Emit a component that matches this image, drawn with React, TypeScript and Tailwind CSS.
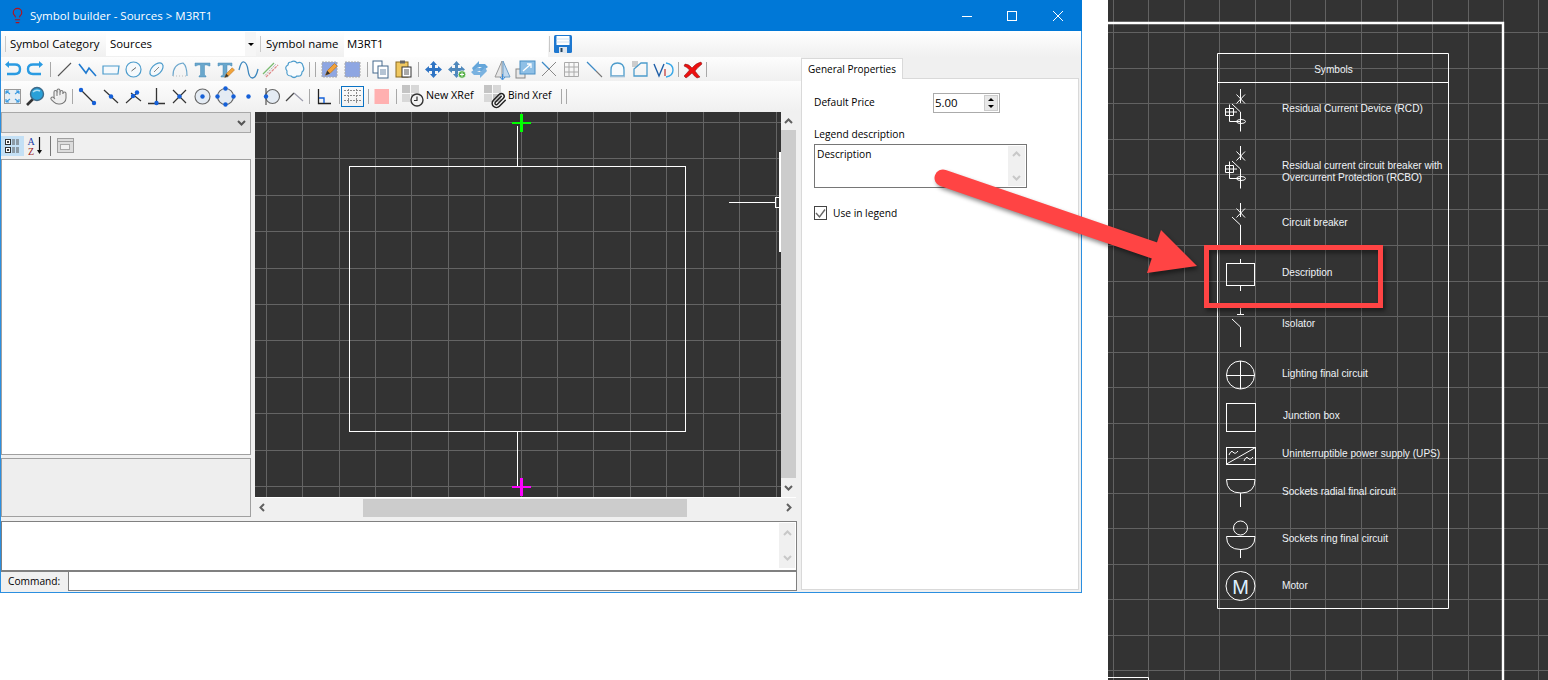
import React from "react";
import { Hand, Lightbulb, Paperclip } from "lucide-react";

const D = "#1560d8";

function Ico({ children }: { children: React.ReactNode }) {
  return (
    <svg width="23" height="23" viewBox="0 0 23 23" fill="none" className="shrink-0">
      {children}
    </svg>
  );
}

const Sep = ({ ml = 0, mr = 0 }: { ml?: number; mr?: number }) => (
  <div className="w-px h-[15px] bg-[#a8a8a8] shrink-0" style={{ marginLeft: ml, marginRight: mr }} />
);

const Dots = ({ pts }: { pts: number[][] }) => (
  <>
    {pts.map((p, i) => (
      <circle key={i} cx={p[0]} cy={p[1]} r="2.2" fill={D} />
    ))}
  </>
);

const Pencil = ({ x = 0, y = 0, s = 1 }: { x?: number; y?: number; s?: number }) => (
  <g transform={`translate(${x} ${y}) scale(${s})`}>
    <path d="M5 18 L7 13 L15 5 L18 8 L10 16 Z" fill="#f2a33a" stroke="#b5701a" strokeWidth="0.7" />
    <path d="M5 18 L7 13 L10 16 Z" fill="#333" />
  </g>
);

const row2a = [
  <Ico><path d="M8 6.5 H14 Q19 6.5 19 11 Q19 16 14 16 H6" stroke="#2a9be2" strokeWidth="2.4" /><path d="M8 3 V10 L4 6.5 Z" fill="#2a9be2" /></Ico>,
  <Ico><path d="M15 6.5 H9 Q4 6.5 4 11 Q4 16 9 16 H17" stroke="#2a9be2" strokeWidth="2.4" /><path d="M15 3 V10 L19 6.5 Z" fill="#2a9be2" /></Ico>,
];
const row2b = [
  <Ico><path d="M5 18 L18 5" stroke="#555" strokeWidth="1.1" /></Ico>,
  <Ico><path d="M3 6 L10 15 L13 10 L20 18" stroke="#1f7ad0" strokeWidth="1.6" /></Ico>,
  <Ico><path d="M4 8 H20 L19 16 H4 Z" stroke="#4c9ccc" strokeWidth="1.2" fill="#f5f9fc" /></Ico>,
  <Ico><circle cx="11.5" cy="11.5" r="7.5" stroke="#4c9ccc" strokeWidth="1.2" fill="#f5f9fc" /><path d="M9.5 13 L14 9.5" stroke="#666" /></Ico>,
  <Ico><ellipse cx="11.5" cy="11.5" rx="8" ry="4.8" transform="rotate(-45 11.5 11.5)" stroke="#4c9ccc" strokeWidth="1.2" fill="#f5f9fc" /><path d="M9 14 L14 9" stroke="#888" /></Ico>,
  <Ico><path d="M5 18 Q5 6 15 5 Q19 8 19 18" stroke="#6ca7cd" strokeWidth="1.2" /><path d="M17 18 h2 M5 18 h11" stroke="#bbb" strokeDasharray="1 2" /></Ico>,
  <Ico><path d="M4 5 H19 V8 H18 L16 7 H13.5 V17 L15 18 V19 H8 V18 L9.5 17 V7 H7 L5 8 H4 Z" fill="#6aa7cc" stroke="#4d8fb8" strokeWidth="0.5" /></Ico>,
  <Ico><path d="M4 5 H18 V8 H17 L16 7 H13 V17 L14 18 V19 H7 V18 L9 17 V7 H6 L5 8 H4 Z" fill="#6aa7cc" stroke="#4d8fb8" strokeWidth="0.5" /><Pencil x={7} y={6} s={0.75} /></Ico>,
  <Ico><path d="M2 12 Q4 3 7 4 Q10 5 11 12 Q12 20 15.5 20 Q19 20 21 11" stroke="#3c86bd" strokeWidth="1.3" /></Ico>,
  <Ico><path d="M3 16 L14 5" stroke="#7abb70" strokeWidth="1.3" /><path d="M6 19 L18 7" stroke="#e08a8a" strokeWidth="1.3" strokeDasharray="3 1" /><path d="M5 17.5 L16 6" stroke="#aaa" strokeDasharray="2 1" /></Ico>,
  <Ico><path d="M8 4 Q12 2 14 5 Q19 3 20 8 Q22 12 19 14 Q19 19 14 18 Q11 21 8 18 Q3 18 4 13 Q1 9 5 7 Q5 4 8 4 Z" stroke="#4c9ccc" strokeWidth="1.2" fill="#f8fbfd" /></Ico>,
];
const row2c = [
  <Ico><rect x="4" y="4" width="15" height="15" fill="#8ea6e2" stroke="#aaa" strokeDasharray="2 1" /><Pencil x={3} y={1} s={0.9} /></Ico>,
  <Ico><rect x="4" y="4" width="15" height="15" fill="#8ea6e2" stroke="#aaa" strokeDasharray="2 1" /></Ico>,
];
const row2d = [
  <Ico><rect x="4" y="3" width="9" height="12" fill="#fff" stroke="#44688c" /><rect x="9" y="8" width="10" height="12" fill="#fff" stroke="#44688c" /><path d="M11 12 h6 M11 14 h6 M11 16 h6" stroke="#6b88a8" /></Ico>,
  <Ico><rect x="4" y="4" width="12" height="15" fill="#f0c860" stroke="#8a6a20" /><rect x="8" y="2.5" width="5" height="3" fill="#666" /><rect x="10" y="9" width="9" height="10" fill="#fff" stroke="#333" /><path d="M12 12 h5 M12 14 h5 M12 16 h5" stroke="#555" /></Ico>,
];
const Move = ({ c = "#2f74c4" }: { c?: string }) => (
  <path d="M11.5 3 L15 7 H13 V10 H16 V8 L20 11.5 L16 15 V13 H13 V16 H15 L11.5 20 L8 16 H10 V13 H7 V15 L3 11.5 L7 8 V10 H10 V7 H8 Z" fill={c} />
);
const row2e = [
  <Ico><Move /></Ico>,
  <Ico><Move c="#4f88bc" /><circle cx="17" cy="16.5" r="3.8" fill="#58b048" stroke="#fff" strokeWidth="0.7" /><path d="M15 16.5 h4 M17 14.5 v4" stroke="#fff" /></Ico>,
  <Ico><path d="M4 10 L11 3 V6 H17 L20 9 L13 14 L10 11 L14 9 H10 L6 14 Z" fill="#65a6da" /><path d="M19 13 L12 20 V17 H6 L3 14 L10 9 L13 12 L9 14 H13 L17 9 Z" fill="#7ab2e0" /></Ico>,
  <Ico><path d="M11 3 V19 H4 Z" fill="#e6e6e6" stroke="#999" /><path d="M12 3 V19 H19 Z" fill="#c2d9ef" stroke="#6f9fc8" /><path d="M11.5 16 V21 M9 19 L11.5 22 L14 19" stroke="#3a8ad8" /></Ico>,
  <Ico><rect x="2" y="11" width="9" height="9" fill="#e8e8e8" stroke="#888" /><rect x="6" y="3" width="15" height="13" fill="#8fc0e6" stroke="#4a8fc4" /><path d="M9 13 L17 6 M13 6 h4 v4" stroke="#fff" strokeWidth="1.3" /></Ico>,
  <Ico><path d="M5 4 L12 11" stroke="#3c8ac6" strokeWidth="1.2" /><path d="M12 11 L19 18" stroke="#888" strokeWidth="1" /><path d="M19 4 L5 18" stroke="#888" strokeWidth="1" /></Ico>,
  <Ico><path d="M4.5 4.5 H18.5 V18.5 H4.5 Z M9 4.5 V18.5 M14 4.5 V18.5 M4.5 9 H18.5 M4.5 14 H18.5" stroke="#aaa" /></Ico>,
  <Ico><path d="M4 4 L13 13" stroke="#3c8ac6" strokeWidth="1.2" /><path d="M13 13 L19 19" stroke="#777" strokeWidth="1.1" /></Ico>,
  <Ico><path d="M5 18 V12 Q5 5 11.5 5 Q18 5 18 12 V18 Z" stroke="#4c9ccc" strokeWidth="1.3" fill="#f8fbfd" /><path d="M4 18.5 H19" stroke="#9fc0d8" strokeWidth="1.6" /></Ico>,
  <Ico><rect x="3" y="3" width="6" height="6" fill="#ccc" /><path d="M5 18 V11 L12 5 H18 V18 Z" stroke="#4c9ccc" strokeWidth="1.3" /></Ico>,
  <Ico><path d="M2 6 L7 18 L12 6" stroke="#1f5fa8" strokeWidth="1.4" /><path d="M14 5 Q21 6 21 12 Q21 18 14 19" stroke="#38a8e8" strokeWidth="1.4" /><path d="M13 11 V18" stroke="#c03030" strokeWidth="1.2" /></Ico>,
];
const row3a = [
  <Ico><rect x="3.5" y="4.5" width="16" height="14" fill="#e6eef4" stroke="#999" /><path d="M5 6 L9 9 M5 6 h3 M5 6 v3 M18 6 L14 9 M18 6 h-3 M18 6 v3 M5 17 L9 14 M5 17 h3 M5 17 v-3 M18 17 L14 14 M18 17 h-3 M18 17 v-3" stroke="#3a9ae0" strokeWidth="1.1" /></Ico>,
  <Ico><path d="M9 14 L3 20" stroke="#333" strokeWidth="2.6" /><circle cx="13" cy="9" r="6.5" fill="#29a0d8" stroke="#3d6a8a" strokeWidth="1.4" /><path d="M9 7 Q12 4 16 6" stroke="#aee0f6" strokeWidth="1.4" /></Ico>,
  <Ico><g transform="translate(2.5 2.5)"><Hand size={18} stroke="#777" strokeWidth={1.4} fill="#eee" /></g></Ico>,
];
const row3b = [
  <Ico><path d="M5 5 L18 18" stroke="#333" strokeWidth="1.2" /><Dots pts={[[5, 5], [18, 18]]} /></Ico>,
  <Ico><path d="M5 5 L19 18" stroke="#333" strokeWidth="1.2" /><Dots pts={[[12, 11.5]]} /></Ico>,
  <Ico><path d="M4 18 L15 8 M9 8 L19 16" stroke="#333" strokeWidth="1.1" /><Dots pts={[[11, 11], [15, 7.5]]} /></Ico>,
  <Ico><path d="M11.5 3 V18 M3 18.5 H20" stroke="#333" strokeWidth="1.3" /><Dots pts={[[11.5, 18]]} /></Ico>,
  <Ico><path d="M5 5 L18 18 M18 5 L5 18" stroke="#333" strokeWidth="1.2" /><Dots pts={[[11.5, 11.5]]} /></Ico>,
  <Ico><circle cx="11.5" cy="11.5" r="7.5" fill="#e4ebf3" stroke="#666" strokeWidth="1.1" /><Dots pts={[[11.5, 11.5]]} /></Ico>,
  <Ico><circle cx="11.5" cy="11.5" r="8" fill="#e4ebf3" stroke="#666" strokeWidth="1.1" /><Dots pts={[[11.5, 3.5], [11.5, 19.5], [3.5, 11.5], [19.5, 11.5]]} /></Ico>,
  <Ico><Dots pts={[[11.5, 11.5]]} /></Ico>,
  <Ico><circle cx="12.5" cy="11.5" r="7" fill="#e4ebf3" stroke="#666" strokeWidth="1.1" /><path d="M6 3 V20" stroke="#444" strokeWidth="1.1" /><Dots pts={[[6, 11.5]]} /></Ico>,
  <Ico><path d="M3 16 L11 8" stroke="#444" strokeWidth="1.2" /><path d="M11 8 L20 16" stroke="#99a" strokeWidth="1.2" /></Ico>,
];

const Chev = ({ dir, c = "#606060" }: { dir: "u" | "d" | "l" | "r"; c?: string }) => {
  const d = { u: "M2 7 L5.5 3.5 L9 7", d: "M2 4 L5.5 7.5 L9 4", l: "M7 2 L3.5 5.5 L7 9", r: "M4 2 L7.5 5.5 L4 9" }[dir];
  return (
    <svg width="11" height="11" viewBox="0 0 11 11" fill="none" className="shrink-0">
      <path d={d} stroke={c} strokeWidth="2" />
    </svg>
  );
};

const cgx = [266, 302, 339, 375, 411, 448, 484, 521, 557, 593, 630, 666, 703, 739, 776];
const cgy = [122, 158, 195, 231, 268, 304, 340, 377, 413, 450, 486];

function CadCanvas() {
  return (
    <svg width="526" height="385" viewBox="255 112 526 385" className="block shrink-0 bg-[#333333]" fill="none">
      <g stroke="#646464" shapeRendering="crispEdges">
        {cgx.map((x) => <path key={x} d={`M${x + 0.5} 112 V497`} />)}
        {cgy.map((y) => <path key={y} d={`M255 ${y + 0.5} H781`} />)}
      </g>
      <g stroke="#ffffff" shapeRendering="crispEdges">
        <rect x="349.5" y="166.5" width="336" height="265" />
        <path d="M517.5 126 V166 M517.5 432 V487 M729 202.5 H775" />
        <rect x="775.5" y="197.5" width="5" height="10" />
        <path d="M780 152 V252" strokeWidth="2" />
      </g>
      <g shapeRendering="crispEdges">
        <rect x="512" y="122" width="19" height="2" fill="#00ff00" />
        <rect x="520" y="114" width="3" height="18" fill="#00ff00" />
        <rect x="512" y="486" width="19" height="2" fill="#ff00ff" />
        <rect x="520" y="478" width="3" height="18" fill="#ff00ff" />
      </g>
    </svg>
  );
}

const rgx = [1113, 1148, 1184, 1219, 1255, 1290, 1325, 1361, 1397, 1432, 1468, 1503, 1538];
const rgy = [32, 68, 103, 139, 174, 209, 245, 281, 316, 352, 387, 423, 458, 493, 528, 564, 599, 635, 670];

const labels: [string, number, number][] = [
  ["Residual Current Device (RCD)", 1282, 111.5],
  ["Residual current circuit breaker with", 1282, 168.5],
  ["Overcurrent Protection (RCBO)", 1282, 180.5],
  ["Circuit breaker", 1282, 225.5],
  ["Description", 1282, 275.5],
  ["Isolator", 1282, 326.5],
  ["Lighting final circuit", 1282, 376.5],
  ["Junction box", 1283, 418.5],
  ["Uninterruptible power supply (UPS)", 1282, 456.5],
  ["Sockets radial final circuit", 1282, 494.5],
  ["Sockets ring final circuit", 1282, 541.5],
  ["Motor", 1282, 588.5],
];

const Rcd = ({ dy = 0 }: { dy?: number }) => (
  <g transform={`translate(0 ${dy})`}>
    <path d="M1240.5 89 V103 M1236.5 94.5 L1245 103.5 M1245 94.5 L1236.5 103.5 M1232 104 L1240.5 112 V131.5" />
    <path d="M1225.5 108.5 H1233.5 V115.5 H1225.5 Z M1229.5 104.5 V121.5 H1241 M1225.5 112 H1237" />
    <ellipse cx="1241" cy="121.5" rx="4.5" ry="2" />
  </g>
);

function Legend() {
  return (
    <svg width="440" height="680" viewBox="1108 0 440 680" className="block bg-[#333333]" fill="none">
      <g stroke="#626262" shapeRendering="crispEdges">
        {rgx.map((x) => <path key={x} d={`M${x + 0.5} 0 V680`} />)}
        {rgy.map((y) => <path key={y} d={`M1108 ${y + 0.5} H1548`} />)}
      </g>
      <path d="M1108 23 H1503 V680" stroke="#ffffff" strokeWidth="2.4" />
      <path d="M1108 677.5 H1148.5 V680" stroke="#ffffff" />
      <g stroke="#ffffff" strokeWidth="1">
        <path d="M1217.5 53.5 H1448.5 V608.5 H1217.5 Z M1217.5 82.5 H1448.5" />
        <Rcd />
        <Rcd dy={57} />
        <path d="M1240.5 203 V217 M1236.5 208.5 L1245 217.5 M1245 208.5 L1236.5 217.5 M1232 217 L1240.5 225 V247" />
        <path d="M1240.5 259 V263 M1240.5 285 V291" />
        <rect x="1226.5" y="263.5" width="28" height="22" />
        <path d="M1240.5 307 V314 M1237 314.5 H1244 M1232 319 L1240.5 327 V347" />
        <circle cx="1240.5" cy="375" r="14" />
        <path d="M1226.5 375.5 H1254.5 M1240.5 361 V389" />
        <rect x="1226.5" y="403.5" width="29" height="28" />
        <rect x="1226.5" y="447.5" width="29" height="17" />
        <path d="M1226.5 464 L1255.5 447.5 M1229 455 Q1231 450 1233 452 Q1235 455 1238 451 M1244 461 Q1246 456 1248 458 Q1250 461 1253 457" />
        <path d="M1226.5 479.5 H1255 Q1255 493 1241 493 Q1226.5 493 1226.5 479.5 Z M1240.5 493 V507" />
        <circle cx="1240.5" cy="528" r="7" />
        <path d="M1226.5 536.5 H1255 Q1255 549.5 1241 549.5 Q1226.5 549.5 1226.5 536.5 Z M1240.5 549.5 V558" />
        <circle cx="1240.5" cy="586" r="14.5" />
      </g>
      <text x="1240.7" y="593.5" textAnchor="middle" fill="#dff0ff" fontSize="20" fontFamily="'Liberation Sans', Arial, sans-serif">M</text>
      <text x="1333.5" y="72.5" textAnchor="middle" fill="#f0f4f8" fontSize="10.1" fontFamily="'Liberation Sans', Arial, sans-serif">Symbols</text>
      {labels.map(([t, x, y]) => (
        <text key={t} x={x} y={y} fill="#f0f4f8" fontSize="10.1" fontFamily="'Liberation Sans', Arial, sans-serif">{t}</text>
      ))}
    </svg>
  );
}

const VBar = ({ cls }: { cls: string }) => <div className={`w-[1px] bg-[#c8c8c8] shrink-0 ${cls}`} />;

export default function App() {
  return (
    <div className="relative flex w-[1548px] h-[680px] overflow-hidden bg-white font-['Open_Sans','Liberation_Sans',sans-serif] text-[11.4px] text-black">
      {/* Window */}
      <div className="flex flex-col w-[1082px] h-[593px] shrink-0 border-x border-b border-[#2b8fe0] bg-[#f0f0f0]">
        <div className="flex items-center h-[31px] -mx-px bg-[#0078d7] text-white shrink-0">
          <div className="w-[9px]" />
          <Lightbulb size={17} stroke="#b5121b" strokeWidth={1.6} />
          <span className="ml-[4px] text-[11.5px]">Symbol builder - Sources &gt; M3RT1</span>
          <div className="flex-1" />
          <svg width="12" height="12" viewBox="0 0 12 12" className="mr-[33px]"><path d="M1 6.5 H11" stroke="#fff" /></svg>
          <svg width="12" height="12" viewBox="0 0 12 12" className="mr-[34px]"><rect x="1.5" y="1.5" width="9" height="9" stroke="#fff" fill="none" /></svg>
          <svg width="12" height="12" viewBox="0 0 12 12" className="mr-[18px]"><path d="M1 1 L11 11 M11 1 L1 11" stroke="#fff" /></svg>
        </div>

        <div className="flex items-center h-[26px] shrink-0 bg-linear-to-b from-white to-[#f0f0f0]">
          <VBar cls="ml-[4px] h-[16px]" />
          <span className="ml-[4px] w-[96px]">Symbol Category</span>
          <div className="flex items-center h-[24px] w-[150px] bg-white pl-[4px]">
            <span className="flex-1">Sources</span>
            <div className="flex items-center justify-center w-[11px] h-full bg-[#f6f6f6]">
              <div className="w-0 h-0 border-x-[3px] border-x-transparent border-t-[3px] border-t-black" />
            </div>
          </div>
          <VBar cls="ml-[4px] h-[16px]" />
          <span className="ml-[5px] w-[78px]">Symbol name</span>
          <div className="flex items-center h-[25px] w-[204px] bg-white pl-[3px]">M3RT1</div>
          <VBar cls="ml-[1px] h-[16px]" />
          <svg width="18" height="18" viewBox="0 0 18 18" className="ml-[4px]">
            <rect x="0" y="0" width="18" height="18" rx="1.5" fill="#1e78d0" />
            <rect x="2.5" y="1" width="13" height="9" fill="#ffffff" />
            <path d="M2.5 4 H15.5 M2.5 7 H15.5" stroke="#d0e0f0" />
            <rect x="5" y="12" width="8" height="6" fill="#dfe6ee" />
            <rect x="6.5" y="13" width="2" height="4" fill="#24425e" />
          </svg>
        </div>

        <div className="flex flex-1 min-h-0">
          <div className="flex flex-col w-[796px] shrink-0">
            {/* toolbars */}
            <div className="flex items-center h-[24px] shrink-0 bg-linear-to-b from-[#fdfdfd] to-[#f0f0f0] w-[800px]">
              {row2a.map((e, i) => <React.Fragment key={i}>{e}</React.Fragment>)}
              <Sep ml={3} mr={2} />
              {row2b.map((e, i) => <React.Fragment key={i}>{e}</React.Fragment>)}
              <Sep ml={3} /><Sep ml={5} mr={2} />
              {row2c.map((e, i) => <React.Fragment key={i}>{e}</React.Fragment>)}
              <Sep ml={3} mr={1} />
              {row2d.map((e, i) => <React.Fragment key={i}>{e}</React.Fragment>)}
              <Sep ml={3} mr={3} />
              {row2e.map((e, i) => <React.Fragment key={i}>{e}</React.Fragment>)}
              <Sep ml={3} mr={2} />
              <Ico><path d="M4 6 Q8 6 11 10 Q15 5 20 4 L21 6 Q16 10 14 13 Q17 17 19 19 L16 20 Q13 18 11 15 Q8 18 5 20 L3 18 Q6 15 8.5 12 Q6 9 3 8 Z" fill="#ee1010" stroke="#7a1010" strokeWidth="0.5" /></Ico>
              <Sep ml={2} />
            </div>
            <div className="flex items-center h-[30px] shrink-0 bg-linear-to-b from-[#fdfdfd] to-[#f0f0f0] w-[800px]">
              {row3a.map((e, i) => <React.Fragment key={i}>{e}</React.Fragment>)}
              <Sep ml={2} mr={3} />
              {row3b.map((e, i) => <React.Fragment key={i}>{e}</React.Fragment>)}
              <Sep ml={3} mr={2} />
              <Ico><path d="M6.5 4 V18.5 H19" stroke="#222" strokeWidth="1.3" /><path d="M7 13 H12 V18" stroke="#1560d8" strokeWidth="1.4" /></Ico>
              <Sep ml={4} mr={1} />
              <div className="flex items-center justify-center w-[23px] h-[21px] border border-[#0a72c4] shrink-0">
                <svg width="17" height="15" viewBox="0 0 17 15" fill="none"><path d="M0 1.5 H17 M0 6.5 H17 M0 11.5 H17 M4.5 0 V15 M12.5 0 V15" stroke="#8a8a8a" strokeDasharray="2 1" /></svg>
              </div>
              <Sep ml={4} mr={1} />
              <Ico><rect x="4.5" y="4" width="14.5" height="15" fill="#ffb0b0" /></Ico>
              <Sep ml={3} mr={4} />
              <svg width="24" height="24" viewBox="0 0 24 24" fill="none" className="shrink-0">
                <rect x="1" y="1" width="8" height="8" fill="#c4c4c4" /><rect x="10" y="1" width="8" height="8" fill="#d8d8d8" /><rect x="1" y="10" width="8" height="8" fill="#d8d8d8" /><rect x="10" y="10" width="8" height="8" fill="#c4c4c4" />
                <circle cx="16" cy="16" r="6" fill="#f2f2f2" stroke="#333" strokeWidth="1.4" /><path d="M16 12.5 V16.5 H13" stroke="#333" strokeWidth="1.2" />
              </svg>
              <span className="ml-[1px] w-[57px] text-[10.7px] -mt-[1px]">New XRef</span>
              <div className="relative w-[24px] h-[24px] shrink-0">
                <svg width="24" height="24" viewBox="0 0 24 24" className="absolute inset-0"><rect x="1" y="1" width="8" height="8" fill="#c4c4c4" /><rect x="10" y="1" width="8" height="8" fill="#d8d8d8" /><rect x="1" y="10" width="8" height="8" fill="#d8d8d8" /><rect x="10" y="10" width="8" height="8" fill="#c4c4c4" /></svg>
                <Paperclip size={17} stroke="#222" strokeWidth={2} className="absolute left-[7px] top-[8px]" />
              </div>
              <span className="ml-px w-[50px] text-[10.2px]">Bind Xref</span>
              <Sep ml={3} /><Sep ml={4} />
            </div>

            {/* main */}
            <div className="flex h-[407px] shrink-0">
              <div className="flex flex-col w-[250px] shrink-0">
                <div className="flex items-center justify-end h-[21px] mt-px pr-[3px] bg-[#e0e0e0] border border-[#a8a8a8]"><Chev dir="d" c="#555" /></div>
                <div className="flex items-center h-[25px] shrink-0">
                  <div className="flex items-center justify-center w-[23px] h-[20px] bg-[#c4e0f5]">
                    <svg width="18" height="16" viewBox="0 0 18 16" fill="none"><rect x="1.5" y="1.5" width="5" height="5" fill="#fff" stroke="#333" /><rect x="1.5" y="9.5" width="5" height="5" fill="#fff" stroke="#333" /><path d="M4 3 V5 M3 4 H5 M4 11 V13 M3 12 H5" stroke="#000" /><path d="M8 2 H16 M8 4 H16 M8 6 H16 M8 10 H16 M8 12 H16 M8 14 H16" stroke="#555" strokeDasharray="3 1" /></svg>
                  </div>
                  <svg width="23" height="22" viewBox="0 0 23 22" fill="none" className="shrink-0">
                    <text x="7" y="9.5" textAnchor="middle" fontSize="10" fontFamily="'Liberation Serif',serif" fill="#1a3ea8">A</text>
                    <text x="7" y="19.5" textAnchor="middle" fontSize="10" fontFamily="'Liberation Serif',serif" fill="#9a1c1c">Z</text>
                    <path d="M15.5 2 V17" stroke="#111" strokeWidth="1.2" /><path d="M13 15 H18 L15.5 19 Z" fill="#111" />
                  </svg>
                  <div className="w-px h-[20px] bg-[#777] ml-[3px] mr-[6px]" />
                  <svg width="18" height="16" viewBox="0 0 18 16" fill="none"><rect x="0.5" y="0.5" width="16" height="14" fill="#dcdcdc" stroke="#a0a0a0" /><path d="M0.5 3.5 H16.5" stroke="#a0a0a0" /><rect x="3.5" y="6.5" width="9" height="5" fill="#f0f0f0" stroke="#a8a8a8" /></svg>
                </div>
                <div className="h-[296px] mt-px shrink-0 bg-white border border-[#a0a0a0]" />
                <div className="h-[59px] mt-[3px] shrink-0 bg-[#eeeeee] border border-[#a0a0a0]" />
              </div>
              <div className="flex flex-col ml-[4px] w-[541px] shrink-0">
                <div className="flex h-[385px] mt-px shrink-0">
                  <CadCanvas />
                  <div className="flex flex-col items-center w-[15px] bg-[#f0f0f0]">
                    <div className="flex items-center justify-center h-[18px] shrink-0"><Chev dir="u" /></div>
                    <div className="flex-1 w-full bg-[#cccccc]" />
                    <div className="flex items-center justify-center h-[19px] shrink-0"><Chev dir="d" /></div>
                  </div>
                </div>
                <div className="flex items-center h-[20px] border-t border-white shrink-0">
                  <div className="flex items-center justify-center w-[15px] shrink-0"><Chev dir="l" /></div>
                  <div className="w-[93px] shrink-0" />
                  <div className="w-[324px] h-[18px] bg-[#cccccc] shrink-0" />
                  <div className="flex-1" />
                  <div className="flex items-center justify-center w-[15px] shrink-0"><Chev dir="r" /></div>
                </div>
              </div>
            </div>

            <div className="flex justify-end h-[49px] mt-[3px] shrink-0 bg-white border border-b-0 border-[#808080] pr-px pt-px">
              <div className="flex flex-col items-center justify-between w-[16px] h-[45px] bg-[#f0f0f0] py-[5px]">
                <Chev dir="u" c="#c8c8c8" /><Chev dir="d" c="#c8c8c8" />
              </div>
            </div>
            <div className="flex items-center h-[21px] shrink-0 border-t-2 border-[#808080] bg-[#f0f0f0]">
              <span className="ml-[7px] w-[60px] text-[10.2px]">Command:</span>
              <div className="flex-1 h-[19px] bg-white border-l border-r border-b border-[#808080]" />
            </div>
          </div>

          {/* Right panel */}
          <div className="flex flex-col flex-1 pl-[4px] pr-[2px] pt-px text-[10.2px]">
            <div className="flex w-[102px] h-[21px] items-center justify-center bg-white border border-b-0 border-[#d9d9d9] text-[10px] shrink-0 -mb-px z-10">General Properties</div>
            <div className="flex flex-col h-[512px] shrink-0 bg-white border border-[#d9d9d9] pl-[12px]">
              <div className="flex items-center mt-[14px] h-[20px]">
                <span className="w-[119px]">Default Price</span>
                <div className="flex items-center h-[20px] w-[67px] border border-[#ababab] pl-[1px] pr-[1px] text-[11.4px]">
                  <span className="flex-1">5.00</span>
                  <div className="flex flex-col w-[14px] h-[16px] bg-[#e8e8e8] border border-[#ccc] items-center justify-around">
                    <div className="w-0 h-0 border-x-[3px] border-x-transparent border-b-[3px] border-b-black" />
                    <div className="w-0 h-0 border-x-[3px] border-x-transparent border-t-[3px] border-t-black" />
                  </div>
                </div>
              </div>
              <div className="mt-[12px] h-[19px] flex items-center">Legend description</div>
              <div className="flex w-[213px] h-[44px] border border-[#767676] pl-[2px] pr-px">
                <span className="flex-1 pt-[2px]">Description</span>
                <div className="flex flex-col items-center justify-between w-[17px] h-[40px] mt-px bg-[#f0f0f0] py-[3px]">
                  <Chev dir="u" c="#c8c8c8" /><Chev dir="d" c="#c8c8c8" />
                </div>
              </div>
              <div className="flex items-center mt-[18px] h-[14px]">
                <div className="flex items-center justify-center w-[13px] h-[14px] border border-[#444]">
                  <svg width="11" height="11" viewBox="0 0 11 11" fill="none"><path d="M1 5 L4.5 9 L10 1.5" stroke="#666" strokeWidth="1.4" /></svg>
                </div>
                <span className="ml-[6px] mt-px">Use in legend</span>
              </div>
            </div>
          </div>
        </div>
      </div>

      <div className="w-[26px] shrink-0" />
      <Legend />

      {/* Annotations above everything */}
      <svg width="1548" height="680" viewBox="0 0 1548 680" fill="none" className="absolute left-0 top-0 pointer-events-none drop-shadow-[2px_3px_2px_rgba(0,0,0,0.45)]">
        <path d="M943 178 L1156 251" stroke="#ff4444" strokeWidth="17" strokeLinecap="round" />
        <path d="M1161 230 L1197 266 L1147 273 Z" fill="#ff4444" />
        <path d="M1206.5 247.5 H1380.5 V305.5 H1206.5 Z" stroke="#ff4444" strokeWidth="5" />
      </svg>
    </div>
  );
}
